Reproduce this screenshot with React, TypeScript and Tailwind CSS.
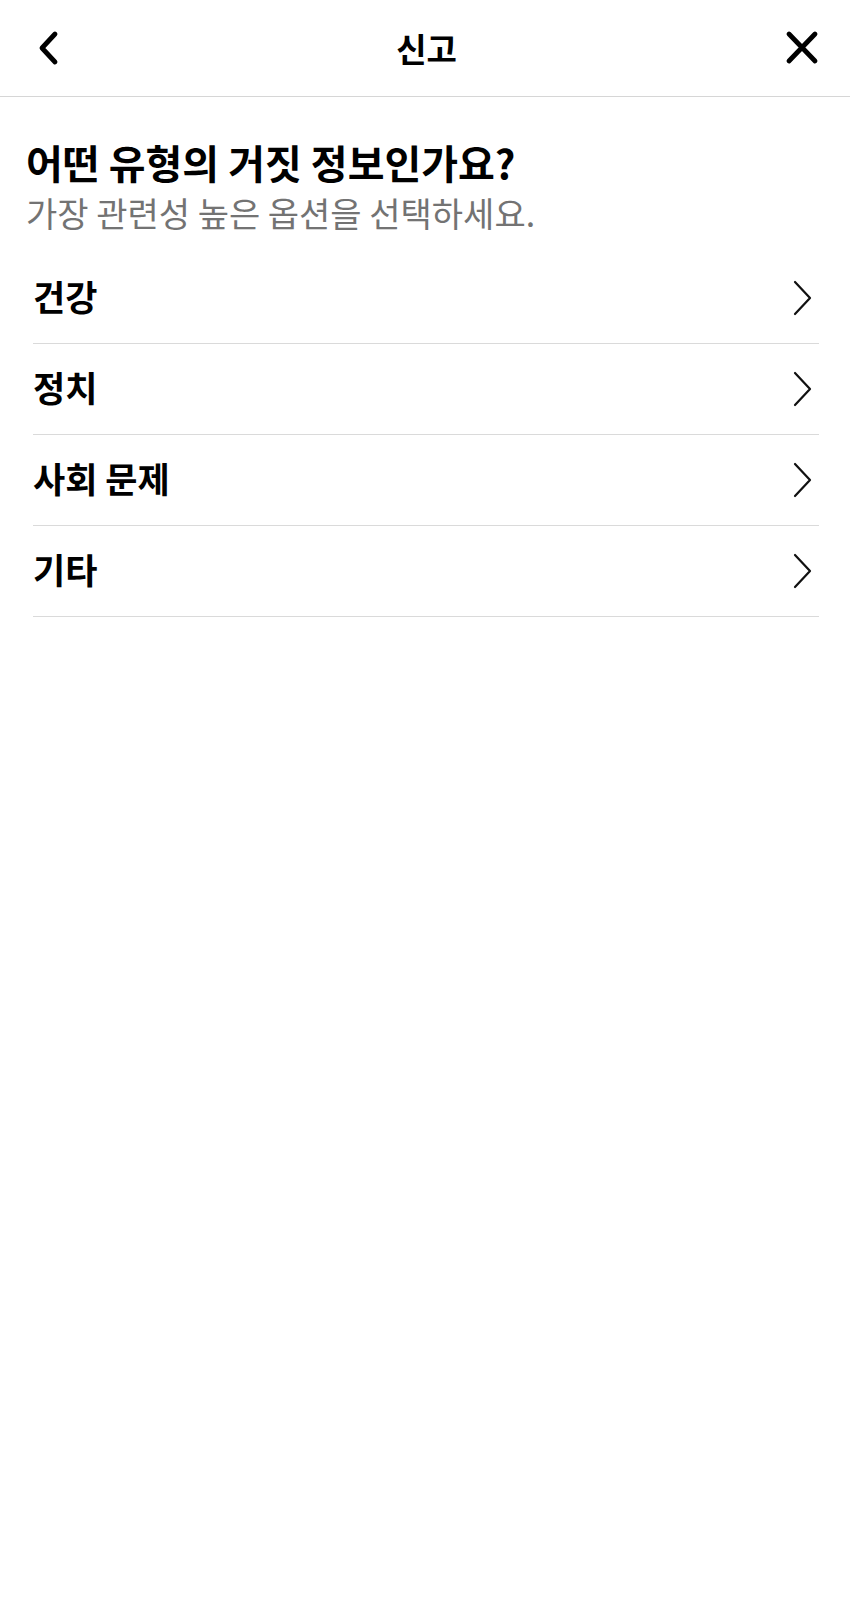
const categories = ['건강', '정치', '사회 문제', '기타'];

function BackIcon() {
  return (
    <svg width="24" height="36" viewBox="0 0 24 36" fill="none">
      <path
        d="M19 4 L6 18 L19 32"
        stroke="#000"
        strokeWidth="4.8"
        strokeLinecap="round"
        strokeLinejoin="round"
      />
    </svg>
  );
}

function CloseIcon() {
  return (
    <svg width="36" height="36" viewBox="0 0 36 36" fill="none">
      <path
        d="M5 4 L31 31 M31 4 L5 31"
        stroke="#000"
        strokeWidth="4.8"
        strokeLinecap="round"
      />
    </svg>
  );
}

function ChevronRight() {
  return (
    <svg width="24" height="36" viewBox="0 0 24 36" fill="none">
      <path
        d="M4 2 L19 18 L4 34"
        stroke="#111"
        strokeWidth="2.2"
        strokeLinecap="round"
        strokeLinejoin="round"
      />
    </svg>
  );
}

export default function App() {
  return (
    <div className="min-h-[1599px] w-full bg-white font-['Noto_Sans_CJK_KR','Noto_Sans',sans-serif] text-black">
      <header className="grid h-[97px] grid-cols-[1fr_auto_1fr] items-center border-b border-[#d6d6d6]">
        <button type="button" className="ml-[36px] flex w-max items-center">
          <BackIcon />
        </button>
        <h1 className="ml-[3px] text-[33px] font-bold leading-none">신고</h1>
        <button type="button" className="mr-[30px] flex w-max items-center justify-self-end">
          <CloseIcon />
        </button>
      </header>

      <section className="px-[26px] pt-[41px]">
        <h2 className="text-[40px] font-bold leading-[48px]">
          어떤 유형의 거짓 정보인가요?
        </h2>
        <p className="mt-[5px] text-[34px] leading-[44px] text-[#737373]">
          가장 관련성 높은 옵션을 선택하세요.
        </p>
      </section>

      <ul className="mt-[18px] pl-[33px] pr-[31px]">
        {categories.map((item) => (
          <li
            key={item}
            className="flex h-[91px] items-center justify-between border-b border-[#dadada]"
          >
            <span className="mb-[5px] text-[35px] font-semibold leading-none">{item}</span>
            <span className="mr-[4px]">
              <ChevronRight />
            </span>
          </li>
        ))}
      </ul>
    </div>
  );
}
